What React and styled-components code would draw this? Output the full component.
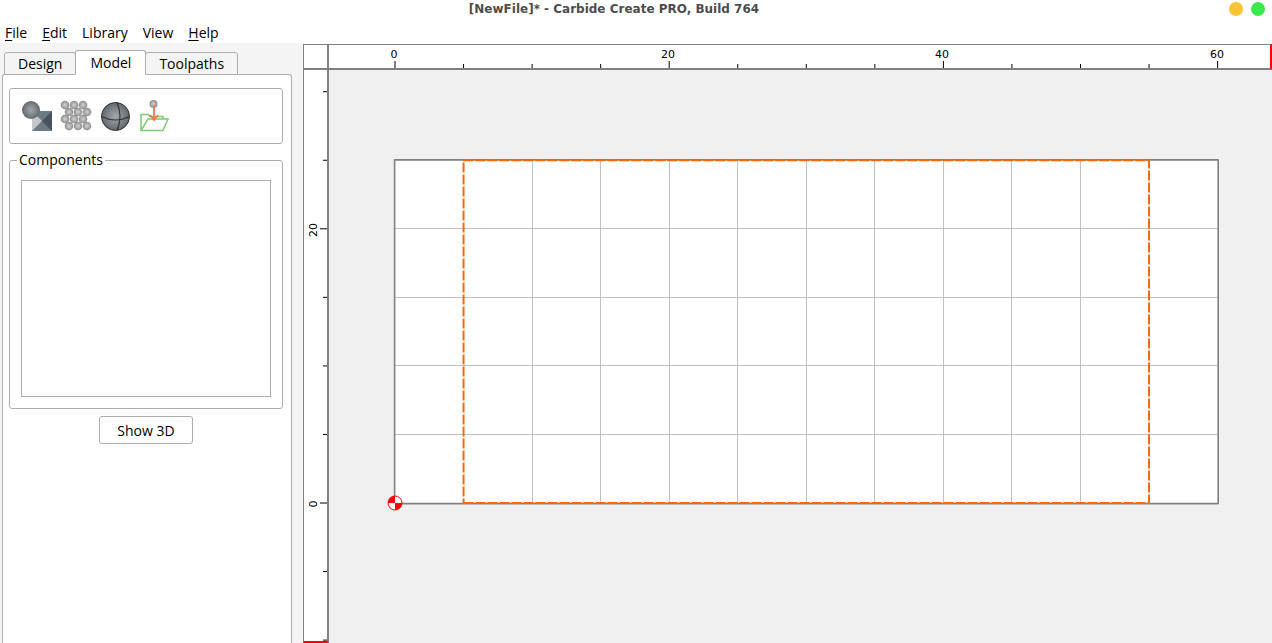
import React from 'react';
import styled, { createGlobalStyle } from 'styled-components';

const SCALE = 13.71;
const RULER = 26;
const ORIGIN_X = 66;
const ORIGIN_Y = 433;
const STOCK = { width: 60, height: 25 };
const STEP = 5;

const range = (from, to) => {
    const list = [];
    for (let n = from; n <= to; n += STEP) list.push(n);
    return list;
};

const toX = (n) => ORIGIN_X + n * SCALE;
const toY = (n) => ORIGIN_Y - n * SCALE;

const menus = ['File', 'Edit', 'Library', 'View', 'Help'];
const tabs = ['Design', 'Model', 'Toolpaths'];

function ShapeIcon()
{
    return (
        <svg width="32" height="32" viewBox="0 0 32 32">
            <path d="M11 11h20v20h-20z" fill="#6b7b85" />
            <path d="M11 11l10 10l-10 10z" fill="#c4c6c7" />
            <path d="M31 11l-10 10l10 10z" fill="#4a535d" />
            <circle cx="10" cy="10" r="9" fill="url(#ball)" />
        </svg>
    );
}

function TextureIcon()
{
    const rows = [[5, 5], [9, 12], [5, 19], [9, 26]];
    return (
        <svg width="32" height="32" viewBox="0 0 32 32">
            {rows.map(([x, y]) => [0, 9, 18].map((dx) => (
                <circle key={`${x + dx}-${y}`} cx={x + dx} cy={y} r="4.3" fill="url(#bead)" />
            )))}
        </svg>
    );
}

function SphereIcon()
{
    return (
        <svg width="32" height="32" viewBox="0 0 32 32">
            <circle cx="16.5" cy="16.5" r="14" fill="url(#ball)" stroke="#333" />
            <path d="M2.5 16.5q14 7 28 0M18 2.5q6 14 0 28" fill="none" stroke="#333" strokeWidth="1.2" />
        </svg>
    );
}

function ImportIcon()
{
    return (
        <svg width="32" height="32" viewBox="0 0 32 32">
            <path d="M3 30.5V14.5H10L12 16.5H25V19M3 30.5L10 19H30L25 30.5Z" fill="none" stroke="#7cca74" strokeWidth="1.5" />
            <circle cx="15.5" cy="4" r="4" fill="url(#bead)" />
            <path d="M16 5V20M12 15L16 20L20 15" fill="none" stroke="#ff7052" strokeWidth="1.8" />
        </svg>
    );
}

const tools = [
    { label: 'Add shape', Icon: ShapeIcon },
    { label: 'Add texture', Icon: TextureIcon },
    { label: 'Add sphere', Icon: SphereIcon },
    { label: 'Import model', Icon: ImportIcon },
];

function TopRuler()
{
    return (
        <RulerTop>
            <Drawing>
                {range(0, 60).map((n) => (
                    <line key={n} x1={toX(n)} x2={toX(n)} y1={n % 20 ? 19 : 16} y2="24" stroke="#000" />
                ))}
                {[0, 20, 40, 60].map((n) => (
                    <Label key={n} x={Math.round(toX(n)) - 1} y="13">{n}</Label>
                ))}
            </Drawing>
        </RulerTop>
    );
}

function SideRuler()
{
    return (
        <RulerSide>
            <Drawing>
                {range(-10, 30).map((n) => (
                    <line key={n} x1={n % 20 ? 19 : 16} x2="24" y1={toY(n)} y2={toY(n)} stroke="#000" />
                ))}
                {[0, 20].map((n) => (
                    <Label key={n} transform={`translate(13 ${Math.round(toY(n)) + 1}) rotate(-90)`}>{n}</Label>
                ))}
            </Drawing>
        </RulerSide>
    );
}

function Workspace()
{
    const left = toX(0);
    const right = toX(STOCK.width);
    const top = toY(STOCK.height);
    const bottom = toY(0);
    return (
        <Stage>
            <Drawing role="img" aria-label="Stock preview">
                <rect x={left} y={top} width={right - left} height={bottom - top} fill="#fff" />
                {range(10, 50).map((n) => (
                    <line key={`v${n}`} x1={Math.floor(toX(n)) + 0.5} x2={Math.floor(toX(n)) + 0.5} y1={top} y2={bottom} stroke="#c0c0c0" />
                ))}
                {range(5, 20).map((n) => (
                    <line key={`h${n}`} x1={left} x2={right} y1={Math.floor(toY(n)) + 0.5} y2={Math.floor(toY(n)) + 0.5} stroke="#c0c0c0" />
                ))}
                <rect x={left - 0.4} y={top - 0.4} width={right - left + 1} height={bottom - top + 1} fill="none" stroke="#808080" strokeWidth="1.6" strokeLinejoin="round" />
                <path
                    d={`M${toX(5)} ${bottom}H${toX(55)}V${top}H${toX(5)}Z`}
                    fill="none"
                    stroke="#ff6600"
                    strokeWidth="2"
                    strokeDasharray="10 2"
                />
                <g transform={`translate(${left} ${bottom})`}>
                    <circle r="7" fill="#fff" stroke="#f00" />
                    <path d="M0 0H-7A7 7 0 0 1 0 -7ZM0 0H7A7 7 0 0 1 0 7Z" fill="#f00" />
                </g>
            </Drawing>
        </Stage>
    );
}

function App()
{
    return (
        <Window>
            <GlobalStyle />
            <Gradients aria-hidden="true">
                <defs>
                    <radialGradient id="ball">
                        <stop offset="0" stopColor="#a4a8aa" />
                        <stop offset="1" stopColor="#62696d" />
                    </radialGradient>
                    <radialGradient id="bead">
                        <stop offset="0" stopColor="#d4d4d4" />
                        <stop offset="1" stopColor="#8c8c8c" />
                    </radialGradient>
                </defs>
            </Gradients>
            <TitleBar>
                <Title>[NewFile]* - Carbide Create PRO, Build 764</Title>
                <Dot $color="#fbc437" aria-label="Minimize" />
                <Dot $color="#3aea4c" aria-label="Maximize" />
            </TitleBar>
            <MenuBar>
                {menus.map((name) => (
                    <MenuItem key={name}>
                        {name === 'File' || name === 'Edit' || name === 'Help' ? <><u>{name[0]}</u>{name.slice(1)}</> : name}
                    </MenuItem>
                ))}
            </MenuBar>
            <Body>
                <Sidebar>
                    <TabList role="tablist">
                        {tabs.map((name) => (
                            <Tab key={name} role="tab" aria-selected={name === 'Model'} $active={name === 'Model'}>{name}</Tab>
                        ))}
                    </TabList>
                    <Panel role="tabpanel">
                        <Toolbar>
                            {tools.map(({ label, Icon }) => (
                                <ToolButton key={label} aria-label={label}><Icon /></ToolButton>
                            ))}
                        </Toolbar>
                        <Group>
                            <Legend>Components</Legend>
                            <ComponentList />
                        </Group>
                        <ShowButton>Show 3D</ShowButton>
                    </Panel>
                </Sidebar>
                <Viewport>
                    <Corner />
                    <TopRuler />
                    <SideRuler />
                    <Workspace />
                </Viewport>
            </Body>
        </Window>
    );
}

export default App;

const GlobalStyle = createGlobalStyle`
    * {
        box-sizing: border-box;
    }

    body {
        margin: 0;
        background-color: #fff;
    }

    button {
        margin: 0;
        padding: 0;
        border: none;
        background: none;
        color: inherit;
        font: inherit;
    }
`

const Window = styled.div`
    height: 100vh;
    display: flex;
    flex-direction: column;
    overflow: hidden;
    color: #000;
    font-family: "Open Sans", "Noto Sans", sans-serif;
    font-size: 14px;
    line-height: 20px;
`

const Gradients = styled.svg`
    position: absolute;
    width: 0;
    height: 0;
`

const TitleBar = styled.header`
    display: flex;
    align-items: center;
    gap: 8px;
    height: 18px;
    padding: 0 7px;
`

const Title = styled.h1`
    flex: 1;
    margin: 0;
    color: #4d4d4d;
    font-family: "DejaVu Sans", sans-serif;
    font-size: 12px;
    font-weight: bold;
    line-height: 18px;
    text-align: center;
`

const Dot = styled.button`
    width: 14px;
    height: 14px;
    border-radius: 50%;
    background-color: ${(props) => props.$color};
`

const MenuBar = styled.nav`
    display: flex;
    gap: 15px;
    height: 25px;
    padding: 5px 5px 0;
`

const MenuItem = styled.button`
    height: 20px;

    u {
        text-underline-offset: 2px;
    }
`

const Body = styled.main`
    flex: 1;
    display: flex;
    min-height: 0;
    background-color: #f4f4f4;
`

const Sidebar = styled.aside`
    flex: none;
    display: flex;
    flex-direction: column;
    width: 303px;
    padding: 7px 11px 0 2px;
`

const TabList = styled.div`
    display: flex;
    align-items: flex-end;
    padding-left: 2px;
    margin-bottom: -1px;
    z-index: 1;
`

const Tab = styled.button`
    height: ${(props) => (props.$active ? '25px' : '23px')};
    padding: 0 ${(props) => (props.$active ? '14px' : '13px')};
    border: 1px solid #adadad;
    border-bottom-color: ${(props) => (props.$active ? '#fff' : '#adadad')};
    border-radius: 3px 3px 0 0;
    background-color: ${(props) => (props.$active ? '#fff' : '#f4f4f4')};
    z-index: ${(props) => (props.$active ? 1 : 0)};

    & + & {
        margin-left: -1px;
    }
`

const Panel = styled.section`
    flex: 1;
    display: flex;
    flex-direction: column;
    padding: 13px 8px 0 6px;
    border: 1px solid #adadad;
    border-bottom: none;
    border-radius: 3px 3px 0 0;
    background-color: #fff;
`

const Toolbar = styled.div`
    display: flex;
    align-items: center;
    gap: 7px;
    height: 56px;
    padding-left: 11px;
    border: 1px solid #adadad;
    border-radius: 3px;
`

const ToolButton = styled.button`
    width: 32px;
    height: 32px;

    svg {
        display: block;
    }
`

const Group = styled.fieldset`
    height: 259px;
    margin: 6px 0 0;
    padding: 10px 11px 11px;
    border: 1px solid #adadad;
    border-radius: 3px;
`

const Legend = styled.legend`
    margin-left: -4px;
    padding: 0 2px;
`

const ComponentList = styled.div`
    height: 217px;
    border: 1px solid #adadad;
`

const ShowButton = styled.button`
    align-self: center;
    width: 94px;
    height: 28px;
    margin-top: 7px;
    padding-top: 1px;
    border: 1px solid #adadad;
    border-radius: 3px;
`

const Viewport = styled.section`
    flex: 1;
    display: grid;
    grid-template-columns: ${RULER}px 1fr;
    grid-template-rows: ${RULER}px 1fr;
    min-width: 0;
    padding-top: 1px;
    background-color: #fff;
`

const Corner = styled.div`
    border: 1px solid #808080;
    border-width: 1px 2px 2px 1px;
`

const RulerTop = styled.div`
    border-top: 1px solid #808080;
    border-bottom: 2px solid #808080;
    border-right: 2px solid #f00;
`

const RulerSide = styled.div`
    border-left: 1px solid #808080;
    border-right: 2px solid #808080;
    border-bottom: 2px solid #f00;
`

const Stage = styled.div`
    min-width: 0;
    background-color: #f0f0f0;
`

const Drawing = styled.svg`
    display: block;
    width: 100%;
    height: 100%;
`

const Label = styled.text`
    fill: #000;
    font-family: "DejaVu Sans", sans-serif;
    font-size: 11px;
    text-anchor: middle;
`
